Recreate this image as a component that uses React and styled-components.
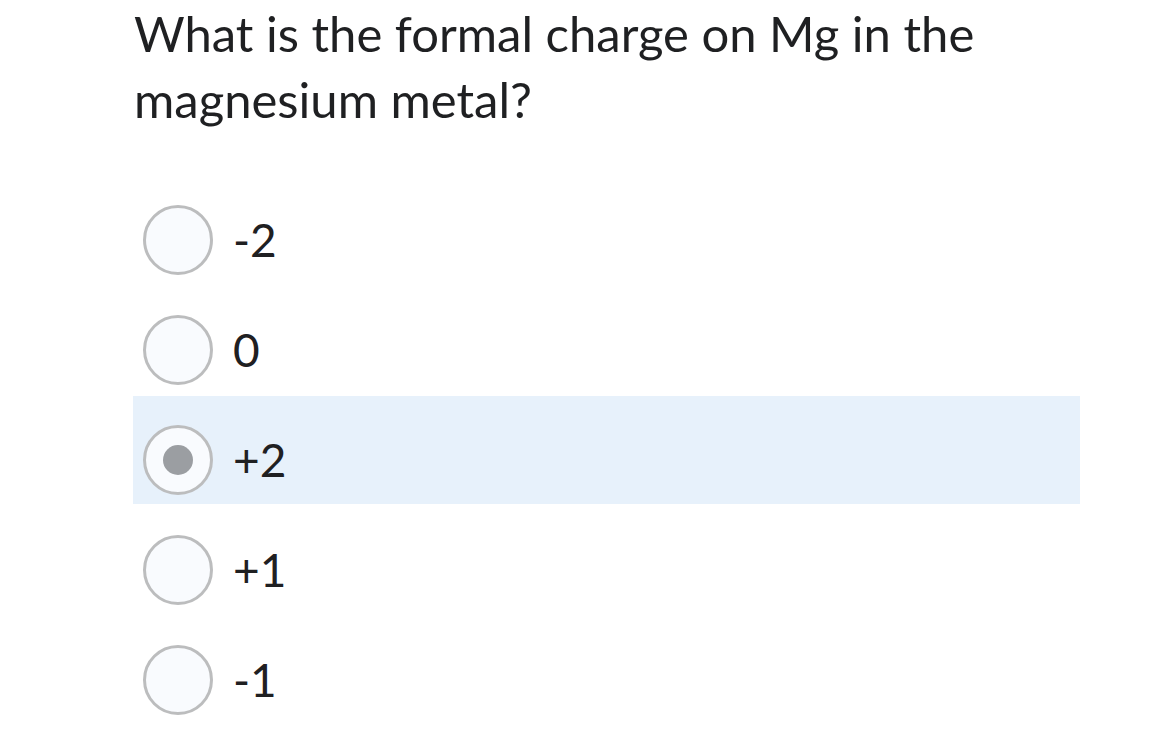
import React from 'react';
import styled, { createGlobalStyle } from 'styled-components';

const GlobalStyle = createGlobalStyle`
  body {
    margin: 0;
    background: #ffffff;
    font-family: Lato, "Noto Sans", sans-serif;
    color: #1f2022;
  }
`;

const Page = styled.div`
  width: 947px;
  margin-left: 133px;
`;

const Question = styled.h1`
  margin: 0;
  font-size: 49px;
  font-weight: 400;
  line-height: 66px;
  width: 900px;
  padding-left: 1px;
`;

const Options = styled.div`
  margin-top: 44px;
  display: flex;
  flex-direction: column;
  gap: 2px;
`;

const Row = styled.label`
  display: flex;
  align-items: flex-start;
  height: 108px;
  box-sizing: border-box;
  padding: 29px 0 0 10px;
  background: ${p => (p.selected ? '#e7f1fb' : 'transparent')};
  cursor: pointer;
`;

const Radio = styled.span`
  width: 70px;
  height: 70px;
  box-sizing: border-box;
  border-radius: 50%;
  border: 3px solid #bcbdbe;
  background: #f9fbfe;
  display: flex;
  align-items: center;
  justify-content: center;
  flex-shrink: 0;
`;

const Dot = styled.span`
  width: 30px;
  height: 30px;
  border-radius: 50%;
  background: #9b9ea2;
`;

const Label = styled.span`
  margin-left: 20px;
  font-size: 46px;
  line-height: 70px;
`;

const choices = ['-2', '0', '+2', '+1', '-1'];

export default function App() {
  const selected = '+2';
  return (
    <Page>
      <GlobalStyle />
      <Question>What is the formal charge on Mg in the magnesium metal?</Question>
      <Options>
        {choices.map(c => (
          <Row key={c} selected={c === selected}>
            <Radio>{c === selected && <Dot />}</Radio>
            <Label>{c}</Label>
          </Row>
        ))}
      </Options>
    </Page>
  );
}
